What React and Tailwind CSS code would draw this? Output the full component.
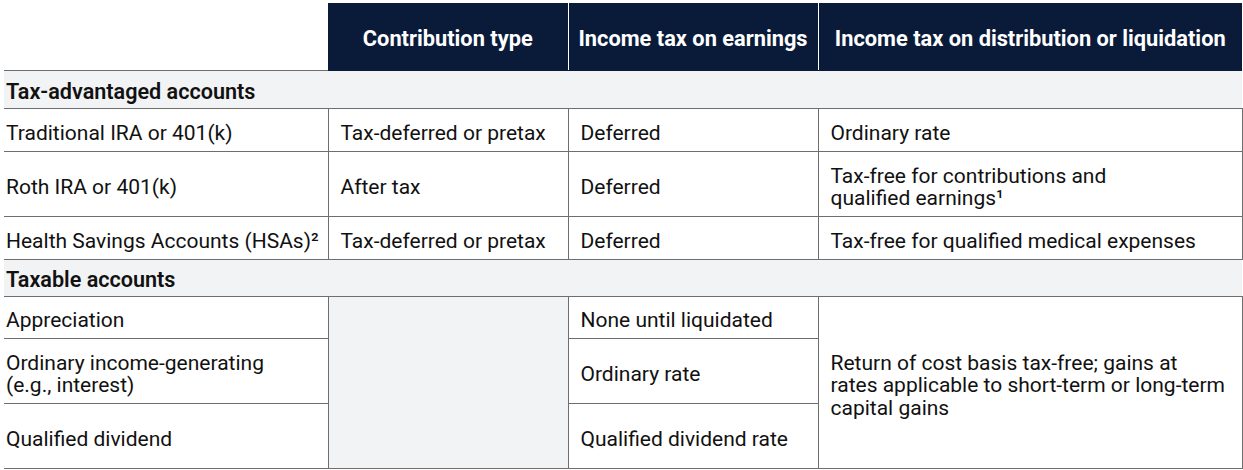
export default function App() {
  const bc = "border-[#6e6e6e]";
  const td = `border-b border-l ${bc} pl-[12px] pr-[4px] pt-[7px] align-middle`;
  const td1 = `border-b ${bc} pl-[2px] pr-[2px] pt-[7px] align-middle`;
  const tdLast = `border-b border-l border-r ${bc} pl-[12px] pr-[8px] pt-[7px] align-middle`;
  const th = "bg-[#0a1b3a] text-white font-bold text-[21.8px] text-center align-middle pt-[6px] whitespace-nowrap";
  const sec = `bg-[#f2f3f5] border-b ${bc} pl-[2px] pt-[6px] font-semibold text-[21.6px] align-middle`;
  return (
    <div className="w-[1243px] h-[470px] bg-white pt-[3px] pl-[4px] font-['Roboto',sans-serif] text-[#111] text-[21px] leading-[22.5px]">
      <table className="border-collapse table-fixed w-[1238px]">
        <colgroup>
          <col className="w-[324px]" />
          <col className="w-[240px]" />
          <col className="w-[250px]" />
          <col className="w-[424px]" />
        </colgroup>
        <tbody>
          <tr className="h-[67px]">
            <td className={`border-b ${bc} bg-white`}></td>
            <td className={`${th} border-b border-[#0a1b3a]`}>Contribution type</td>
            <td className={`${th} border-l border-l-white border-b border-b-[#0a1b3a]`}>Income tax on earnings</td>
            <td className={`${th} border-l border-l-white border-b border-b-[#0a1b3a]`}>
              Income tax on distribution or liquidation
            </td>
          </tr>
          <tr className="h-[38px]">
            <td colSpan={4} className={sec}>
              Tax-advantaged accounts
            </td>
          </tr>
          <tr className="h-[43px]">
            <td className={td1}>Traditional IRA or 401(k)</td>
            <td className={td}>Tax-deferred or pretax</td>
            <td className={td}>Deferred</td>
            <td className={tdLast}>Ordinary rate</td>
          </tr>
          <tr className="h-[65px]">
            <td className={td1}>Roth IRA or 401(k)</td>
            <td className={td}>After tax</td>
            <td className={td}>Deferred</td>
            <td className={tdLast}>
              Tax-free for contributions and
              <br />
              qualified earnings¹
            </td>
          </tr>
          <tr className="h-[43px]">
            <td className={`${td1} whitespace-nowrap`}>Health Savings Accounts (HSAs)²</td>
            <td className={td}>Tax-deferred or pretax</td>
            <td className={td}>Deferred</td>
            <td className={tdLast}>Tax-free for qualified medical expenses</td>
          </tr>
          <tr className="h-[37px]">
            <td colSpan={4} className={sec}>
              Taxable accounts
            </td>
          </tr>
          <tr className="h-[42px]">
            <td className={td1}>Appreciation</td>
            <td rowSpan={3} className={`border-b border-l ${bc} bg-[#f2f3f5]`}></td>
            <td className={td}>None until liquidated</td>
            <td rowSpan={3} className={`${tdLast} pr-[14px]`}>
              Return of cost basis tax-free; gains at
              <br />
              rates applicable to short-term or <span className="whitespace-nowrap">long-term</span>
              <br />
              capital gains
            </td>
          </tr>
          <tr className="h-[65px]">
            <td className={td1}>
              Ordinary income-generating
              <br />
              (e.g., interest)
            </td>
            <td className={td}>Ordinary rate</td>
          </tr>
          <tr className="h-[65px]">
            <td className={td1}>Qualified dividend</td>
            <td className={td}>Qualified dividend rate</td>
          </tr>
        </tbody>
      </table>
    </div>
  );
}
